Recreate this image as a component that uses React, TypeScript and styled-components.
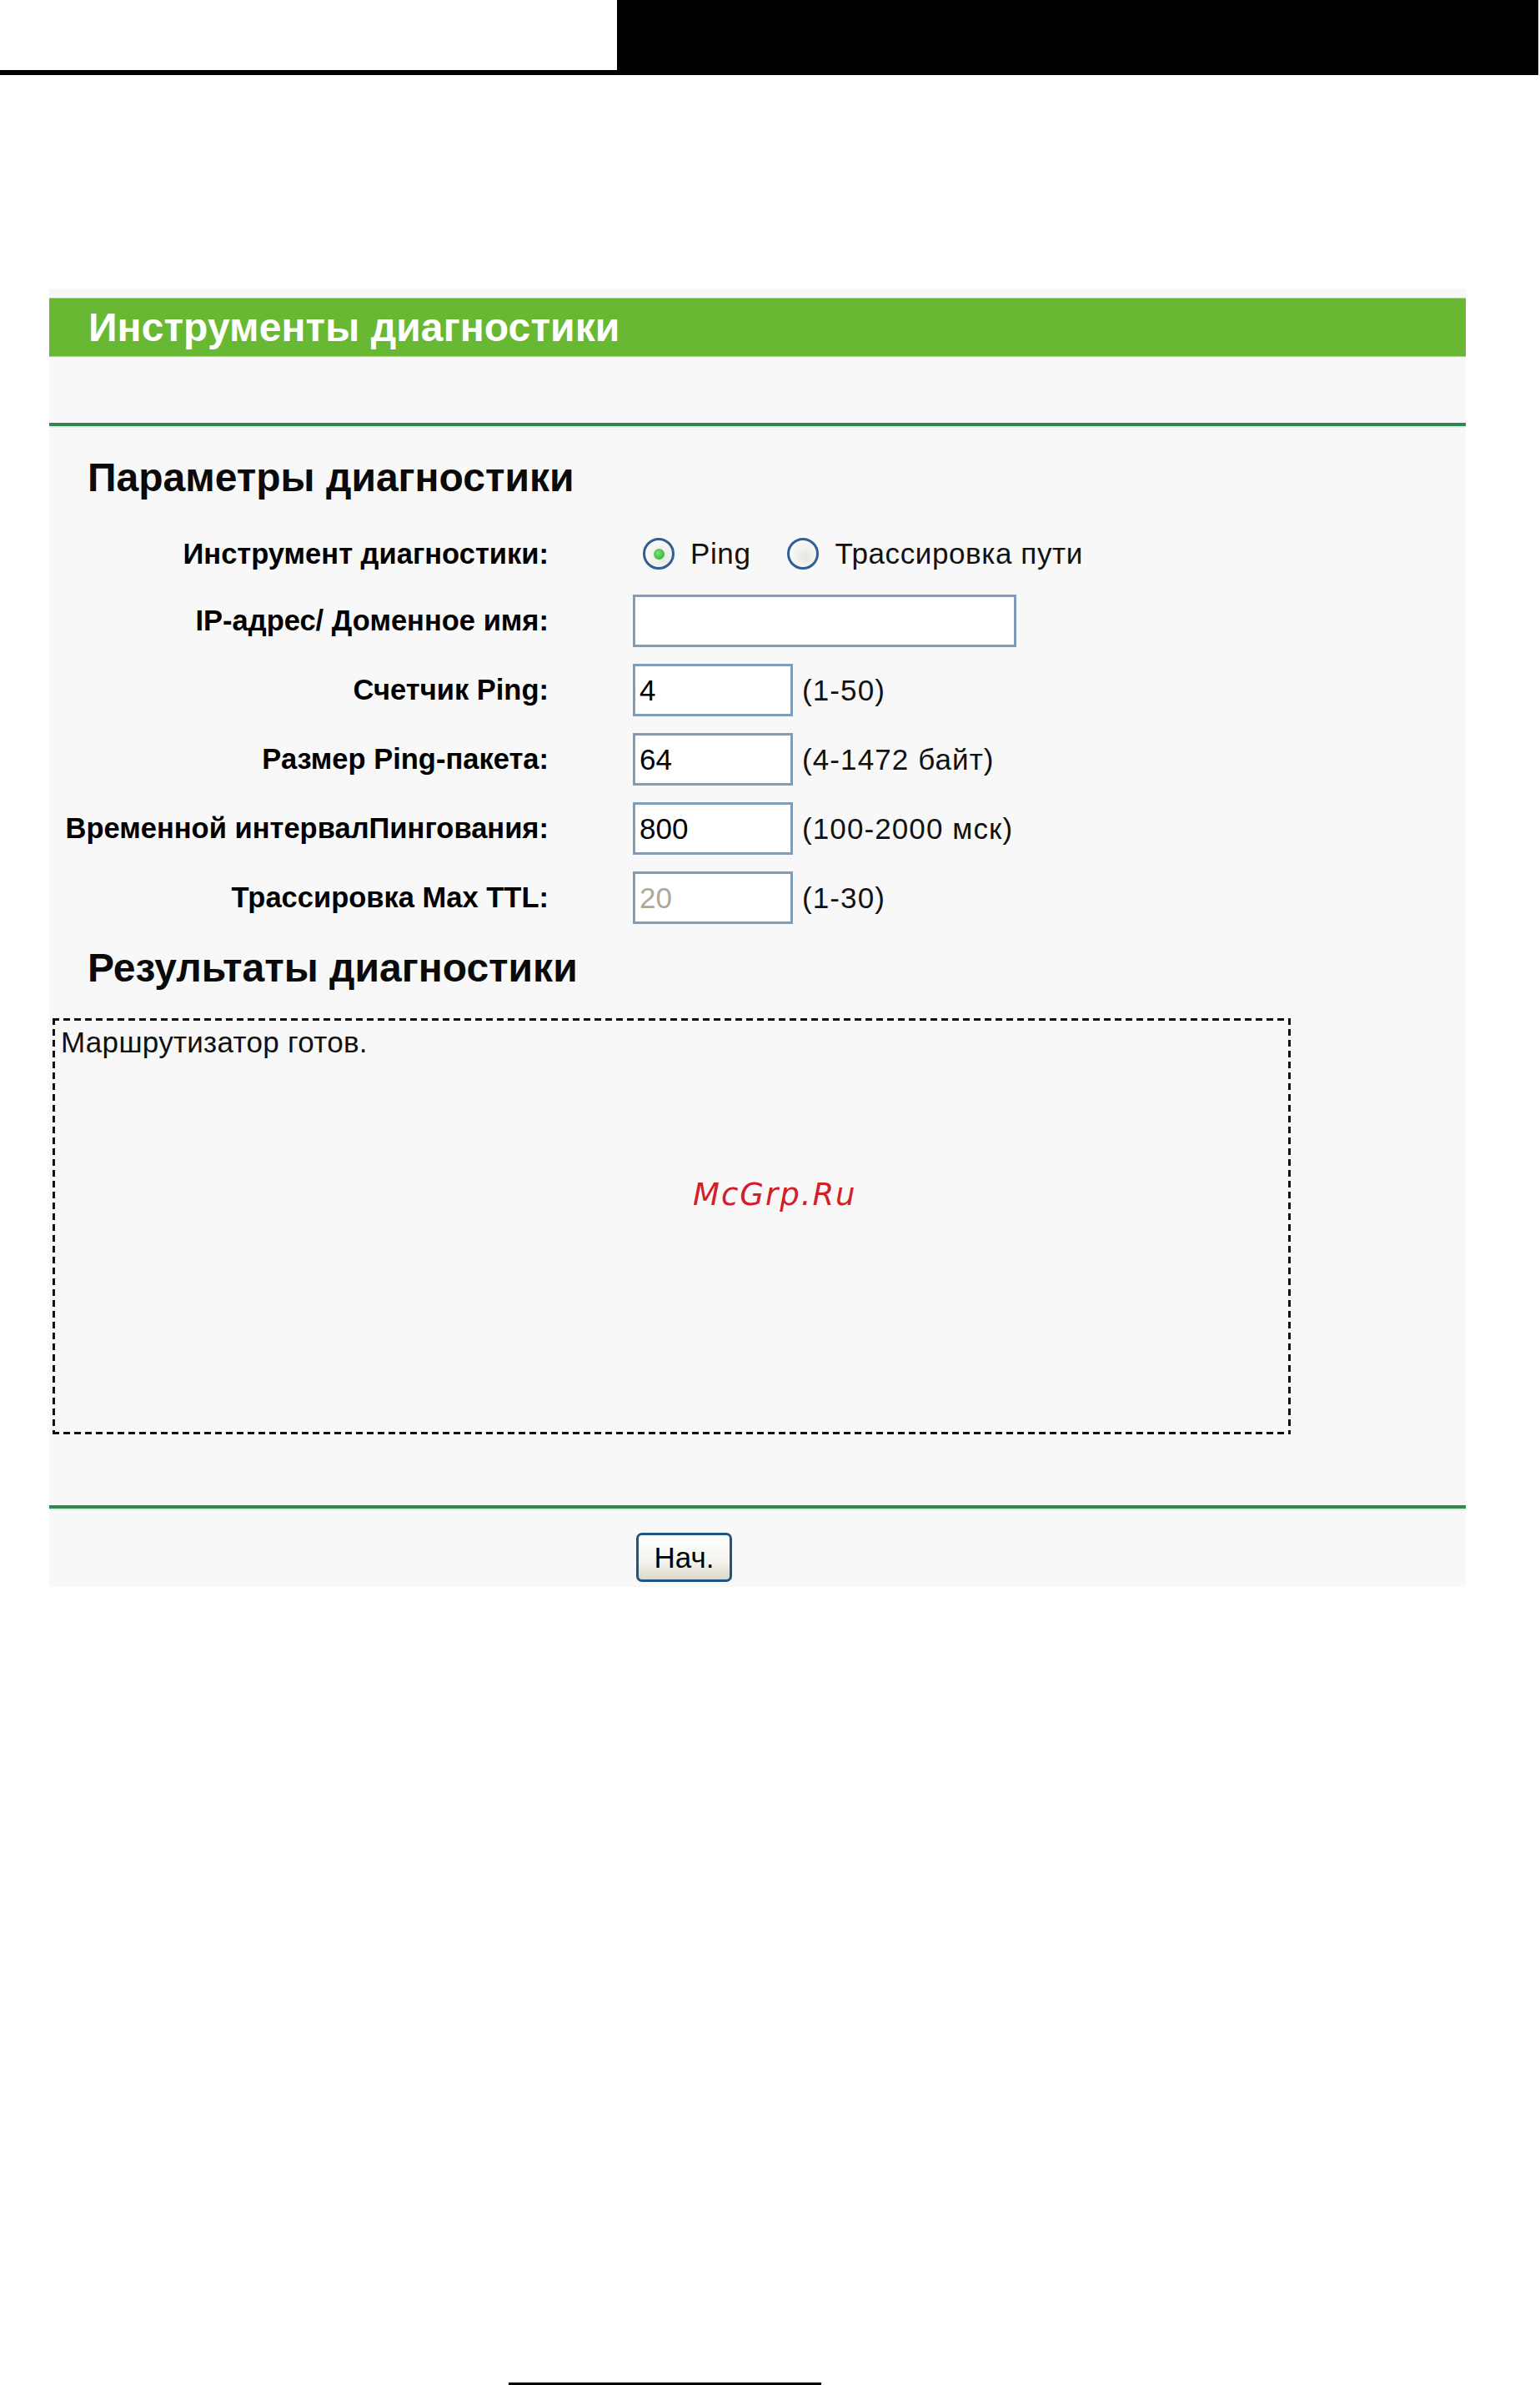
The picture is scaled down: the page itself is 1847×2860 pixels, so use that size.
import styled, { createGlobalStyle } from "styled-components";

const GlobalStyle = createGlobalStyle`
  html, body {
    margin: 0;
    padding: 0;
    background: #fff;
  }
  body {
    font-family: "Liberation Sans", Arial, sans-serif;
    color: #000;
  }
`;

const Page = styled.div`
  width: 1847px;
  height: 2860px;
  display: flex;
  flex-direction: column;
`;

const TopBar = styled.div`
  display: flex;
  align-items: flex-end;
  height: 90px;
  padding-right: 2px;
`;

const TopRule = styled.div`
  width: 740px;
  height: 6px;
  background: #000;
`;

const TopBlock = styled.div`
  flex: 1;
  height: 90px;
  background: #000;
`;

const Panel = styled.div`
  margin: 256px 0 0 59px;
  width: 1699px;
  padding: 11px 0 6px;
  background: #f8f8f8;
`;

const Header = styled.div`
  height: 71px;
  box-sizing: border-box;
  padding-left: 47px;
  background: #69b834;
  border-top: 1px solid #a3d67f;
  border-bottom: 1px solid #a3d67f;
  color: #fff;
  font-size: 48px;
  font-weight: bold;
  line-height: 69px;
  letter-spacing: 0.1px;
`;

const Divider = styled.div<{ $gap: number }>`
  margin-top: ${(p) => p.$gap}px;
  height: 4px;
  background: #2f8752;
  box-shadow: 0 2px 0 #dfece3;
`;

const SectionTitle = styled.h2<{ $gap: number }>`
  margin: ${(p) => p.$gap}px 0 0;
  padding-left: 46px;
  font-size: 48px;
  font-weight: bold;
  line-height: 56px;
  color: #0a0a0a;
`;

const Form = styled.div`
  margin-top: 24px;
  display: flex;
  flex-direction: column;
`;

const Row = styled.div<{ $h: number }>`
  display: flex;
  align-items: center;
  height: ${(p) => p.$h}px;
`;

const Label = styled.div`
  width: 599px;
  text-align: right;
  font-size: 34.5px;
  font-weight: bold;
  white-space: nowrap;
`;

const Field = styled.div`
  margin-left: 101px;
  display: flex;
  align-items: center;
  gap: 11px;
  font-size: 35px;
`;

const RadioOption = styled.label<{ $first?: boolean }>`
  display: flex;
  align-items: center;
  gap: 19px;
  margin-left: ${(p) => (p.$first ? 12 : 33)}px;
  color: #111;
  font-size: 35px;
  letter-spacing: 0.6px;
`;

const RadioMark = styled.span<{ $checked?: boolean }>`
  width: 38px;
  height: 38px;
  box-sizing: border-box;
  border-radius: 50%;
  border: 3px solid #2f5f93;
  background: radial-gradient(circle at 60% 60%, #e6e6e0 0%, #f7f7f5 60%, #fff 100%);
  display: flex;
  align-items: center;
  justify-content: center;

  &::after {
    content: "";
    display: ${(p) => (p.$checked ? "block" : "none")};
    width: 13px;
    height: 13px;
    border-radius: 50%;
    background: radial-gradient(circle at 40% 40%, #7de07d, #1fa61f);
  }
`;

const TextInput = styled.input<{ $w: number }>`
  width: ${(p) => p.$w}px;
  height: 63px;
  box-sizing: border-box;
  border: 3px solid #7f9db9;
  background: #fff;
  padding: 0 5px;
  font-family: "Liberation Sans", Arial, sans-serif;
  font-size: 35px;
  color: #000;
  outline: none;

  &:disabled {
    color: #aca899;
    -webkit-text-fill-color: #aca899;
    background: #fff;
    opacity: 1;
  }
`;

const Hint = styled.span`
  color: #111;
  letter-spacing: 1.1px;
`;

const dash = "#111";

const ResultsBox = styled.div`
  position: relative;
  margin: 32px 0 0 4px;
  width: 1485px;
  height: 499px;
  box-sizing: border-box;
  padding: 9px 10px;
  font-size: 35px;
  line-height: 39px;
  letter-spacing: 0.3px;
  color: #111;
  background:
    repeating-linear-gradient(90deg, ${dash} 0 8px, transparent 8px 13px) top left / 100% 3px no-repeat,
    repeating-linear-gradient(90deg, ${dash} 0 8px, transparent 8px 13px) bottom left / 100% 3px no-repeat,
    repeating-linear-gradient(180deg, ${dash} 0 8px, transparent 8px 13px) top left / 3px 100% no-repeat,
    repeating-linear-gradient(180deg, ${dash} 0 8px, transparent 8px 13px) top right / 3px 100% no-repeat;
`;

const Watermark = styled.span`
  position: absolute;
  left: 768px;
  top: 193px;
  font-family: "DejaVu Sans", Verdana, sans-serif;
  font-style: italic;
  font-size: 37px;
  line-height: 1;
  letter-spacing: 2px;
  color: #d0202a;
`;

const ButtonRow = styled.div`
  margin-top: 29px;
  padding-left: 704px;
`;

const Button = styled.button`
  width: 115px;
  height: 59px;
  box-sizing: border-box;
  border: 3px solid #1f5485;
  border-radius: 7px;
  background: linear-gradient(#ffffff, #f4f3ee 60%, #dcd9c8);
  font-family: "Liberation Sans", Arial, sans-serif;
  font-size: 35px;
  color: #000;
  padding: 0;
`;

const BottomRule = styled.div`
  margin: auto 0 0 610px;
  width: 375px;
  height: 3px;
  background: #000;
`;

const rows = [
  { label: "Счетчик Ping:", value: "4", hint: "(1-50)" },
  { label: "Размер Ping-пакета:", value: "64", hint: "(4-1472 байт)" },
  { label: "Временной интервалПингования:", value: "800", hint: "(100-2000 мск)" },
  { label: "Трассировка Max TTL:", value: "20", hint: "(1-30)", disabled: true },
];

export default function App() {
  return (
    <Page>
      <GlobalStyle />
      <TopBar>
        <TopRule />
        <TopBlock />
      </TopBar>

      <Panel>
        <Header>Инструменты диагностики</Header>
        <Divider $gap={79} />
        <SectionTitle $gap={34}>Параметры диагностики</SectionTitle>

        <Form>
          <Row $h={78}>
            <Label>Инструмент диагностики:</Label>
            <Field>
              <RadioOption $first>
                <RadioMark $checked />
                Ping
              </RadioOption>
              <RadioOption>
                <RadioMark />
                Трассировка пути
              </RadioOption>
            </Field>
          </Row>
          <Row $h={83}>
            <Label>IP-адрес/ Доменное имя:</Label>
            <Field>
              <TextInput $w={460} defaultValue="" />
            </Field>
          </Row>
          {rows.map((r) => (
            <Row $h={83} key={r.label}>
              <Label>{r.label}</Label>
              <Field>
                <TextInput $w={192} defaultValue={r.value} disabled={r.disabled} />
                <Hint>{r.hint}</Hint>
              </Field>
            </Row>
          ))}
        </Form>

        <SectionTitle $gap={15}>Результаты диагностики</SectionTitle>
        <ResultsBox>
          Маршрутизатор готов.
          <Watermark>McGrp.Ru</Watermark>
        </ResultsBox>

        <Divider $gap={85} />
        <ButtonRow>
          <Button>Нач.</Button>
        </ButtonRow>
      </Panel>

      <BottomRule />
    </Page>
  );
}
